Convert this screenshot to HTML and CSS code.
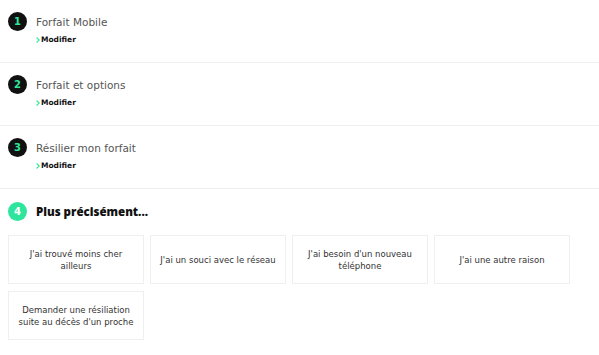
FILE: index.html
```html
<!DOCTYPE html>
<html lang="fr">
<head>
<meta charset="utf-8">
<link rel="stylesheet" href="styles.css">
</head>
<body>
<div class="steps">
  <section class="step">
    <div class="num num-done">1</div>
    <div class="step-body">
      <div class="step-title">Forfait Mobile</div>
      <a class="modify"><svg class="chev" width="4" height="6" viewBox="0 0 4 6"><path d="M0.6 0.5 L3.2 3 L0.6 5.5" fill="none" stroke="#2ee59d" stroke-width="1.1"/></svg>Modifier</a>
    </div>
  </section>
  <section class="step">
    <div class="num num-done">2</div>
    <div class="step-body">
      <div class="step-title">Forfait et options</div>
      <a class="modify"><svg class="chev" width="4" height="6" viewBox="0 0 4 6"><path d="M0.6 0.5 L3.2 3 L0.6 5.5" fill="none" stroke="#2ee59d" stroke-width="1.1"/></svg>Modifier</a>
    </div>
  </section>
  <section class="step">
    <div class="num num-done">3</div>
    <div class="step-body">
      <div class="step-title">Résilier mon forfait</div>
      <a class="modify"><svg class="chev" width="4" height="6" viewBox="0 0 4 6"><path d="M0.6 0.5 L3.2 3 L0.6 5.5" fill="none" stroke="#2ee59d" stroke-width="1.1"/></svg>Modifier</a>
    </div>
  </section>
  <section class="step-current">
    <div class="current-head">
      <div class="num num-active">4</div>
      <h2 class="current-title">Plus précisément...</h2>
    </div>
    <div class="choices">
      <div class="choice">J'ai trouvé moins cher ailleurs</div>
      <div class="choice">J'ai un souci avec le réseau</div>
      <div class="choice">J'ai besoin d'un nouveau téléphone</div>
      <div class="choice">J'ai une autre raison</div>
      <div class="choice">Demander une résiliation suite au décès d'un proche</div>
    </div>
  </section>
</div>
</body>
</html>
```
FILE: styles.css
```css
* { box-sizing: border-box; }
html, body { margin: 0; padding: 0; background: #fff; }
body {
  font-family: "DejaVu Sans", "Noto Sans", sans-serif;
  color: #222;
  width: 599px;
  height: 355px;
  overflow: hidden;
}
.step {
  height: 63px;
  border-bottom: 1px solid #eeeeee;
  display: flex;
  align-items: flex-start;
  padding: 12px 0 0 8px;
  gap: 9px;
}
.num {
  width: 19px;
  height: 19px;
  border-radius: 50%;
  display: flex;
  align-items: center;
  justify-content: center;
  font-weight: bold;
  font-size: 10px;
  flex: none;
}
.num-done { background: #111; color: #2ee59d; }
.num-active { background: #2ee59d; color: #fff; }
.step-body { display: flex; flex-direction: column; }
.step-title {
  font-size: 10.5px;
  color: #555;
  line-height: 20px;
}
.modify {
  margin-top: 2px;
  font-size: 7.5px;
  font-weight: bold;
  color: #111;
  display: flex;
  align-items: center;
  line-height: 12px;
}
.chev { margin-right: 1px; flex: none; }
.step-current { padding: 13px 0 0 8px; }
.current-head { display: flex; align-items: center; gap: 9px; }
.current-title {
  margin: 0;
  font-family: "Open Sans", "DejaVu Sans", sans-serif;
  font-size: 11.5px;
  font-weight: 800;
  color: #111;
}
.choices {
  margin-top: 14px;
  display: grid;
  grid-template-columns: repeat(4, 136px);
  grid-auto-rows: 49px;
  gap: 7px 6px;
}
.choice {
  border: 1px solid #efefef;
  display: flex;
  align-items: center;
  justify-content: center;
  text-align: center;
  font-size: 8.5px;
  line-height: 12px;
  color: #333;
  padding: 0 8px;
}
```
